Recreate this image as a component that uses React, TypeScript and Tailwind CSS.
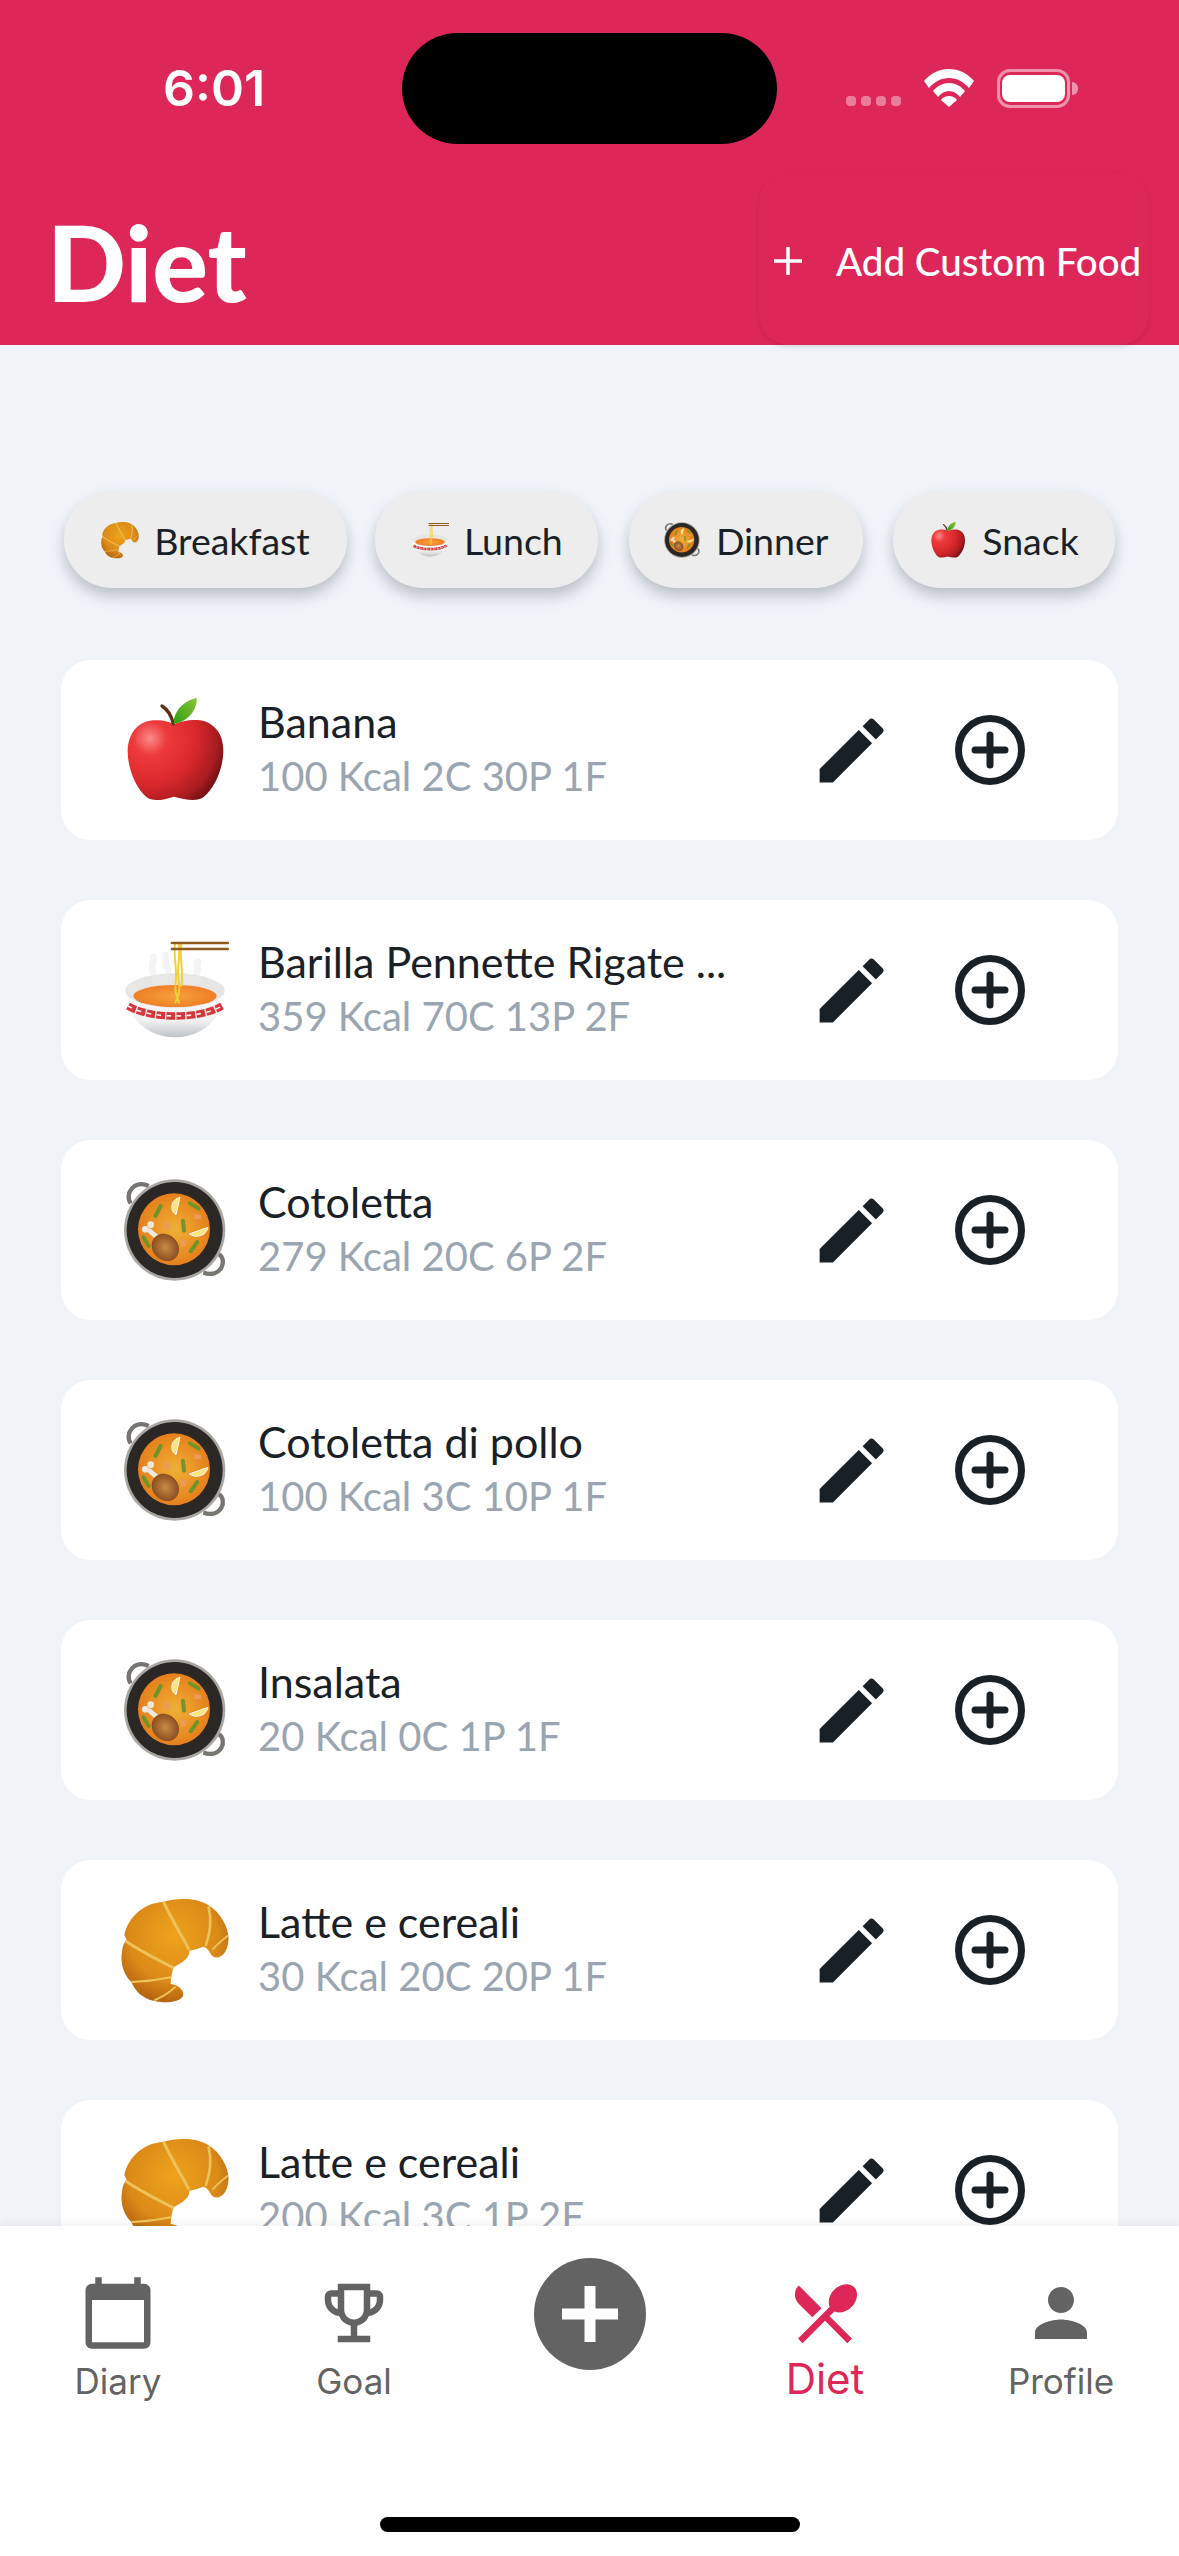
import React, { useId } from 'react';
import { MdCalendarToday, MdEdit, MdOutlineEmojiEvents, MdPerson, MdRestaurantMenu } from 'react-icons/md';

type Kind = 'apple' | 'bowl' | 'paella' | 'croissant';

// the emoji are drawn in the coordinates of a 480 wide crop, shown through a 324 box
const Apple = () => {
  const id = useId();
  return (
    <>
      <defs>
        <radialGradient id={`${id}b`} gradientUnits="userSpaceOnUse" cx="150" cy="175" r="230">
          <stop offset="0" stopColor="#fb8a8a" />
          <stop offset="0.22" stopColor="#ee3a3c" />
          <stop offset="0.6" stopColor="#d9282c" />
          <stop offset="0.88" stopColor="#a81c20" />
          <stop offset="1" stopColor="#7a1216" />
        </radialGradient>
        <linearGradient id={`${id}l`} x1="0" y1="1" x2="1" y2="0">
          <stop offset="0" stopColor="#2e9a10" />
          <stop offset="1" stopColor="#8cc63a" />
        </linearGradient>
      </defs>
      <path d="M222 133C205 122 175 118 150 122C105 130 83 170 83 215C83 265 108 325 140 352C158 366 190 360 222 350C258 360 292 366 312 350C345 322 370 265 370 210C370 165 345 128 300 121C272 118 242 124 222 133Z" fill={`url(#${id}b)`} />
      <path d="M220 132C215 108 205 90 186 78" fill="none" stroke="#5a3018" strokeWidth="10" strokeLinecap="round" />
      <path d="M221 131C220 95 250 62 290 54C292 90 265 125 221 131Z" fill={`url(#${id}l)`} />
    </>
  );
};

const Bowl = () => {
  const id = useId();
  return (
    <>
      <defs>
        <linearGradient id={`${id}w`} x1="0" y1="0" x2="0" y2="1">
          <stop offset="0" stopColor="#ffffff" />
          <stop offset="0.65" stopColor="#f0f0f0" />
          <stop offset="1" stopColor="#bfc3c6" />
        </linearGradient>
        <radialGradient id={`${id}s`}>
          <stop offset="0" stopColor="#f7a23a" />
          <stop offset="1" stopColor="#ee7f28" />
        </radialGradient>
      </defs>
      <path d="M160 160C150 135 165 120 160 110M205 150C190 130 200 115 198 105M290 160C300 140 285 135 295 125" fill="none" stroke="#ececec" strokeWidth="20" strokeLinecap="round" opacity="0.6" />
      <path d="M76 212C78 290 140 352 225 352C310 352 372 290 374 212Z" fill={`url(#${id}w)`} />
      <ellipse cx="225" cy="212" rx="149" ry="52" fill="#e6e6e4" />
      <ellipse cx="225" cy="228" rx="125" ry="33" fill={`url(#${id}s)`} />
      <path d="M84 258C150 298 300 298 366 258" fill="none" stroke="#d6353a" strokeWidth="22" strokeDasharray="26 4" />
      <path d="M84 258C150 298 300 298 366 258" fill="none" stroke="#f6eeee" strokeWidth="5" strokeDasharray="14 16" />
      <path d="M226 66C218 110 234 150 226 195C224 215 232 235 238 250M236 66C244 110 226 150 238 195C240 215 232 235 225 250M245 66C236 110 252 150 244 200" fill="none" stroke="#f4cf3c" strokeWidth="6" />
      <rect x="212" y="65" width="175" height="8" rx="3" fill="#8f5a1c" />
      <rect x="212" y="83" width="175" height="8" rx="3" fill="#8f5a1c" />
    </>
  );
};

const Paella = () => {
  const id = useId();
  return (
    <>
      <defs>
        <radialGradient id={`${id}f`}>
          <stop offset="0" stopColor="#eeb136" />
          <stop offset="1" stopColor="#e67f1c" />
        </radialGradient>
        <radialGradient id={`${id}c`}>
          <stop offset="0" stopColor="#c98a48" />
          <stop offset="1" stopColor="#8b4f20" />
        </radialGradient>
      </defs>
      <path d="M92 130C72 100 104 58 146 78" fill="none" stroke="#77756f" strokeWidth="13" />
      <path d="M356 282C384 300 364 356 310 338" fill="none" stroke="#77756f" strokeWidth="13" />
      <circle cx="224" cy="210" r="152" fill="#a9a7a2" />
      <circle cx="224" cy="210" r="144" fill="#2b2725" />
      <circle cx="222" cy="208" r="108" fill={`url(#${id}f)`} />
      <g fill="none" stroke="#6f9428" strokeWidth="12" strokeLinecap="round">
        <path d="M182 138L166 168" />
        <path d="M270 130L296 146" />
        <path d="M249 182L252 212" />
        <path d="M130 232L146 258" />
        <path d="M292 246L272 274" />
      </g>
      <path d="M240 112C212 118 208 150 228 164Z" fill="#fbe27a" stroke="#fff" strokeWidth="3" />
      <path d="M324 202C318 228 288 236 268 222Z" fill="#fbe27a" stroke="#fff" strokeWidth="3" />
      <g fill="#ea9a5a">
        <ellipse cx="292" cy="170" rx="12" ry="8" />
        <ellipse cx="200" cy="197" rx="9" ry="12" />
        <ellipse cx="250" cy="249" rx="9" ry="12" />
      </g>
      <path d="M148 212L172 232" stroke="#eee8dc" strokeWidth="14" strokeLinecap="round" />
      <circle cx="136" cy="208" r="10" fill="#eee8dc" />
      <circle cx="152" cy="194" r="10" fill="#eee8dc" />
      <ellipse cx="196" cy="262" rx="38" ry="44" transform="rotate(-45 196 262)" fill={`url(#${id}c)`} />
    </>
  );
};

const Croissant = () => {
  const id = useId();
  return (
    <>
      <defs>
        <radialGradient id={`${id}c`} gradientUnits="userSpaceOnUse" cx="220" cy="170" r="220">
          <stop offset="0" stopColor="#eea31c" />
          <stop offset="0.6" stopColor="#dc8a18" />
          <stop offset="1" stopColor="#a9590e" />
        </radialGradient>
      </defs>
      <path d="M73 165C85 110 130 70 190 65C225 55 285 50 325 75C365 100 390 150 385 185C382 215 365 235 345 232C330 228 328 205 312 200C295 205 280 210 268 212C268 228 262 240 220 262C216 280 212 295 212 312C240 315 255 335 248 350C235 368 190 370 160 362C130 355 105 335 94 305C70 285 60 245 66 215C68 195 74 185 80 180Z" fill={`url(#${id}c)`} />
      <g fill="none" stroke="#eec25a" strokeLinecap="round" strokeLinejoin="round">
        <path d="M192 68C215 120 245 165 265 205" strokeWidth="9" />
        <path d="M326 82C335 120 330 160 318 195" strokeWidth="8" />
        <path d="M382 168C365 182 350 195 338 208" strokeWidth="5" />
        <path d="M80 185C125 215 175 240 218 262" strokeWidth="9" />
        <path d="M96 306C135 305 175 300 212 292" strokeWidth="6" />
        <path d="M225 322C205 340 185 352 165 360" strokeWidth="6" />
      </g>
    </>
  );
};

const Emoji = ({ kind, size }: { kind: Kind; size: number }) => (
  <svg viewBox="63 48 324 324" width={size} height={size} className="shrink-0">
    {kind === 'apple' && <Apple />}
    {kind === 'bowl' && <Bowl />}
    {kind === 'paella' && <Paella />}
    {kind === 'croissant' && <Croissant />}
  </svg>
);

const chips: { label: string; kind: Kind; w: string }[] = [
  { label: 'Breakfast', kind: 'croissant', w: 'w-[283px]' },
  { label: 'Lunch', kind: 'bowl', w: 'w-[223px]' },
  { label: 'Dinner', kind: 'paella', w: 'w-[234px]' },
  { label: 'Snack', kind: 'apple', w: 'w-[222px]' }
];

const foods: { name: string; info: string; kind: Kind }[] = [
  { name: 'Banana', info: '100 Kcal 2C 30P 1F', kind: 'apple' },
  { name: 'Barilla Pennette Rigate ...', info: '359 Kcal 70C 13P 2F', kind: 'bowl' },
  { name: 'Cotoletta', info: '279 Kcal 20C 6P 2F', kind: 'paella' },
  { name: 'Cotoletta di pollo', info: '100 Kcal 3C 10P 1F', kind: 'paella' },
  { name: 'Insalata', info: '20 Kcal 0C 1P 1F', kind: 'paella' },
  { name: 'Latte e cereali', info: '30 Kcal 20C 20P 1F', kind: 'croissant' },
  { name: 'Latte e cereali', info: '200 Kcal 3C 1P 2F', kind: 'croissant' }
];

const StatusBar = () => (
  <div className="flex h-[144px] pt-[33px]">
    <div className="w-[402px] pl-[163px] pt-[24px] font-['Inter',sans-serif] text-[50px] leading-[62px] font-semibold text-white">
      6:01
    </div>
    <div className="h-[111px] w-[375px] rounded-[56px] bg-black" />
    <div className="flex items-start pl-[69px] pt-[36px]">
      <div className="mt-[27px] flex gap-[5px]">
        {[0, 1, 2, 3].map(i => (
          <span key={i} className="h-[10px] w-[10px] rounded-[4px] bg-white/40" />
        ))}
      </div>
      <svg viewBox="0 0 50 38" width="50" height="38" className="ml-[23px]" fill="white">
        <path d="M25 0C15 0 7 4 0 12L5 19C10 13 17 9 25 9C33 9 40 13 45 19L50 12C43 4 35 0 25 0Z" />
        <path d="M25 14C19 14 13 17 9 22L14 28C17 24 21 22 25 22C29 22 33 24 36 28L41 22C37 17 31 14 25 14Z" />
        <path d="M25 27C22 27 19 28 17 31L25 38L33 31C31 28 28 27 25 27Z" />
      </svg>
      <div className="ml-[23px] flex items-center">
        <div className="flex h-[39px] w-[73px] items-center justify-center rounded-[13px] border-[3px] border-white/50">
          <div className="h-[27px] w-[63px] rounded-[8px] bg-white" />
        </div>
        <div className="ml-[2px] h-[13px] w-[6px] rounded-r-full bg-white/50" />
      </div>
    </div>
  </div>
);

const PlusCircle = () => (
  <svg viewBox="0 0 70 70" width="70" height="70" fill="none" stroke="#1a2126" strokeLinecap="round">
    <circle cx="35" cy="35" r="31.5" strokeWidth="7" />
    <path d="M35 20V50M20 35H50" strokeWidth="7" />
  </svg>
);

const FoodCard = ({ name, info, kind }: { name: string; info: string; kind: Kind }) => (
  <div className="flex h-[180px] shrink-0 items-center rounded-[30px] bg-white pl-[60px] pr-[93px]">
    <Emoji kind={kind} size={108} />
    <div className="ml-[29px] min-w-0 flex-1 font-['Lato',sans-serif] leading-[53px]">
      <div className="-mt-[2px] text-[43px] text-[#1a2126]">{name}</div>
      <div className="mt-[2px] text-[40px] text-[#9aa5b1]">{info}</div>
    </div>
    <MdEdit size={85} color="#1a2126" />
    <div className="ml-[61px]">
      <PlusCircle />
    </div>
  </div>
);

const Tab = ({ icon, label, active }: { icon: React.ReactNode; label: string; active?: boolean }) => (
  <div className={`flex w-[236px] flex-col items-center ${active ? 'text-[#dd2758]' : 'text-[#636363]'}`}>
    {icon}
    <span className={`font-['Inter',sans-serif] ${active ? 'mt-[3px] text-[42px] leading-[48px]' : 'mt-[7px] text-[35px] leading-[44px]'}`}>
      {label}
    </span>
  </div>
);

export default function App() {
  return (
    <div className="flex h-[2556px] w-[1179px] flex-col overflow-hidden bg-[#f0f4f9]">
      {/* Header */}
      <header className="h-[345px] shrink-0 bg-[#dd2758]">
        <StatusBar />
        <div className="mt-[29px] flex items-start justify-between pl-[47px] pr-[30px]">
          <h1 className="mt-[3px] font-['Lato',sans-serif] text-[104px] leading-[172px] font-black text-white">Diet</h1>
          <div className="flex h-[172px] w-[390px] items-center rounded-[30px] bg-[#dd2758] pl-[15px] shadow-[0_2px_4px_rgba(0,0,0,0.1)]">
            <svg viewBox="0 0 28 28" width="28" height="28" stroke="white" strokeWidth="3.5" className="mt-[4px]">
              <path d="M14 0V28M0 14H28" />
            </svg>
            <span className="ml-[34px] mt-[5px] whitespace-nowrap font-['Lato',sans-serif] text-[38.5px] font-medium text-white">
              Add Custom Food
            </span>
          </div>
        </div>
      </header>

      {/* List */}
      <main className="flex min-h-0 flex-1 flex-col overflow-hidden px-[61px] pt-[146px]">
        <div className="mb-[72px] flex shrink-0 justify-between pl-[3px] pr-[3px]">
          {chips.map((c, i) => (
            <div
              key={c.label}
              className={`flex h-[97px] items-center justify-center gap-[15px] rounded-[48px] bg-[#ededed] shadow-[0_8px_14px_rgba(90,95,110,0.35)] ${c.w} ${i === 1 ? '-ml-[2px]' : ''}`}
            >
              <Emoji kind={c.kind} size={38} />
              <span className="mt-[4px] font-['Lato',sans-serif] text-[37.5px] text-[#1a2126]">{c.label}</span>
            </div>
          ))}
        </div>
        <div className="flex flex-col gap-[60px]">
          {foods.map((f, i) => (
            <FoodCard key={i} {...f} />
          ))}
        </div>
      </main>

      {/* Tab bar */}
      <nav className="h-[330px] shrink-0 bg-white shadow-[0_-3px_8px_rgba(0,0,0,0.05)]">
        <div className="flex h-[291px]">
          <div className="flex pt-[48px]">
            <Tab icon={<MdCalendarToday size={78} />} label="Diary" />
            <Tab icon={<MdOutlineEmojiEvents size={78} />} label="Goal" />
          </div>
          <div className="flex w-[235px] justify-center pt-[32px]">
            <div className="flex h-[112px] w-[112px] items-center justify-center rounded-full bg-[#636363]">
              <svg viewBox="0 0 56 56" width="56" height="56" fill="white">
                <path d="M22.5 0H33.5V22.5H56V33.5H33.5V56H22.5V33.5H0V22.5H22.5Z" />
              </svg>
            </div>
          </div>
          <div className="flex pt-[48px]">
            <Tab icon={<MdRestaurantMenu size={78} />} label="Diet" active />
            <Tab icon={<MdPerson size={78} />} label="Profile" />
          </div>
        </div>
        <div className="mx-auto h-[15px] w-[420px] rounded-full bg-black" />
      </nav>
    </div>
  );
}
